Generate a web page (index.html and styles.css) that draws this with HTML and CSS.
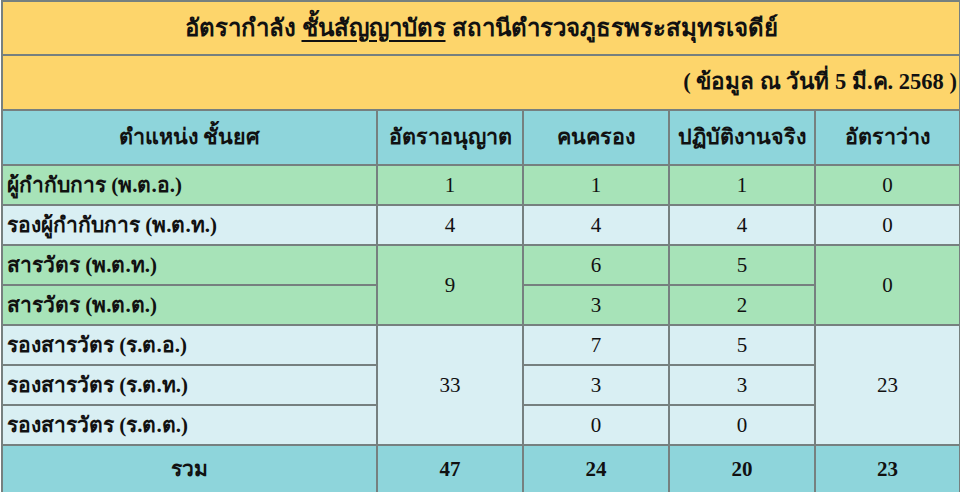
FILE: index.html
```html
<!DOCTYPE html>
<html lang="th">
<head>
<meta charset="utf-8">
<title>อัตรากำลัง ชั้นสัญญาบัตร</title>
<link rel="stylesheet" href="styles.css">
</head>
<body>
<table class="sheet">
  <colgroup>
    <col class="c-pos">
    <col class="c-num">
    <col class="c-num">
    <col class="c-num">
    <col class="c-last">
  </colgroup>
  <tbody>
    <tr class="r-title">
      <td colspan="5" class="title">อัตรากำลัง <u>ชั้นสัญญาบัตร</u> สถานีตำรวจภูธรพระสมุทรเจดีย์</td>
    </tr>
    <tr class="r-date">
      <td colspan="5" class="date">( ข้อมูล ณ วันที่ 5 มี.ค. 2568 )</td>
    </tr>
    <tr class="r-head">
      <th>ตำแหน่ง ชั้นยศ</th>
      <th>อัตราอนุญาต</th>
      <th>คนครอง</th>
      <th>ปฏิบัติงานจริง</th>
      <th>อัตราว่าง</th>
    </tr>
    <tr class="r-row green">
      <td class="label">ผู้กำกับการ (พ.ต.อ.)</td>
      <td>1</td><td>1</td><td>1</td><td>0</td>
    </tr>
    <tr class="r-row blue">
      <td class="label">รองผู้กำกับการ (พ.ต.ท.)</td>
      <td>4</td><td>4</td><td>4</td><td>0</td>
    </tr>
    <tr class="r-row green">
      <td class="label">สารวัตร (พ.ต.ท.)</td>
      <td rowspan="2">9</td><td>6</td><td>5</td><td rowspan="2">0</td>
    </tr>
    <tr class="r-row green">
      <td class="label">สารวัตร (พ.ต.ต.)</td>
      <td>3</td><td>2</td>
    </tr>
    <tr class="r-row blue">
      <td class="label">รองสารวัตร (ร.ต.อ.)</td>
      <td rowspan="3">33</td><td>7</td><td>5</td><td rowspan="3">23</td>
    </tr>
    <tr class="r-row blue">
      <td class="label">รองสารวัตร (ร.ต.ท.)</td>
      <td>3</td><td>3</td>
    </tr>
    <tr class="r-row blue">
      <td class="label">รองสารวัตร (ร.ต.ต.)</td>
      <td>0</td><td>0</td>
    </tr>
    <tr class="r-total">
      <td class="total-label">รวม</td>
      <td>47</td><td>24</td><td>20</td><td>23</td>
    </tr>
  </tbody>
</table>
</body>
</html>
```

FILE: styles.css
```css
html, body {
  margin: 0;
  padding: 0;
  background: #ffffff;
}

body {
  padding-left: 1px;
  font-family: "Liberation Serif", "Noto Sans", serif;
  color: #111;
}

.sheet {
  border-collapse: collapse;
  table-layout: fixed;
  width: 958px;
  border: 2px solid #76807f;
}

.c-pos { width: 375px; }
.c-num { width: 146px; }
.c-last { width: 145px; }

.sheet td,
.sheet th {
  border: 2px solid #76807f;
  padding: 0;
  text-align: center;
  vertical-align: middle;
  font-size: 21px;
  line-height: 1;
}

.sheet .r-title td,
.sheet .r-date td {
  background: #fdd56b;
}

.sheet .r-title td { height: 52px; }
.sheet .r-date td { height: 53px; }

.sheet .title {
  font-size: 24px;
  font-weight: bold;
}

.title u {
  text-decoration-thickness: 2px;
  text-underline-offset: 4px;
}

.sheet .date {
  text-align: right;
  padding-right: 2px;
  font-size: 22.5px;
  font-weight: bold;
}

.sheet .r-head th {
  background: #8ed5db;
  height: 53px;
  font-weight: bold;
  font-size: 21.5px;
}

.sheet .r-row td { height: 38px; }

.sheet .green td { background: #a7e3b8; }
.sheet .blue td { background: #d9eff3; }

.sheet .r-row .label {
  text-align: left;
  padding-left: 4px;
  font-weight: bold;
  font-size: 21px;
}

.sheet .r-total td {
  background: #8ed5db;
  height: 46px;
  font-weight: bold;
}
```
